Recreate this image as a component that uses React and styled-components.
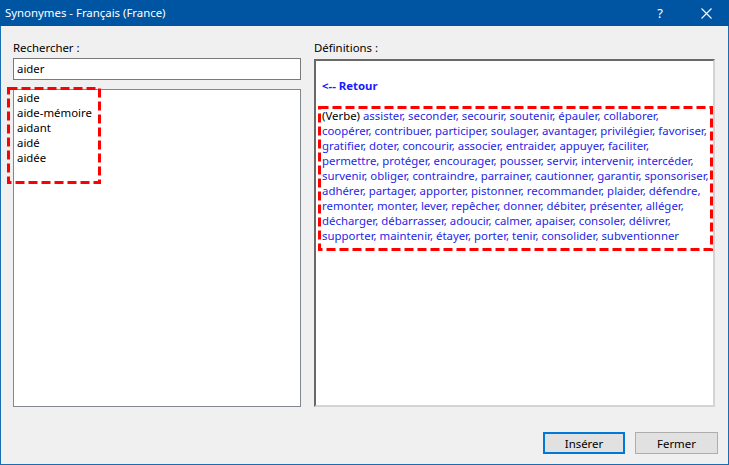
import styled, { createGlobalStyle } from "styled-components";

const GlobalStyle = createGlobalStyle`
  html, body {
    margin: 0;
    padding: 0;
    background: #f0f0f0;
  }
  body {
    font-family: "Noto Sans", "DejaVu Sans", sans-serif;
    font-size: 11.4px;
  }
`;

const Window = styled.div`
  box-sizing: border-box;
  width: 729px;
  height: 465px;
  border: 1px solid #1a6cb3;
  border-top: none;
  background: #f0f0f0;
  display: flex;
  flex-direction: column;
`;

const TitleBar = styled.div`
  height: 26px;
  background: #0055a2;
  color: #ffffff;
  display: flex;
  align-items: center;
  margin: 0 -1px;
  padding-left: 5px;
  font-size: 11.4px;
`;

const Title = styled.div`
  flex: 1;
  line-height: 26px;
`;

const TitleButton = styled.div`
  width: ${(p) => p.$w}px;
  height: 26px;
  display: flex;
  align-items: center;
  justify-content: center;
  font-size: 13px;
`;

const Body = styled.div`
  flex: 1;
  display: flex;
  gap: 13px;
  padding: 14px 13px 0 12px;
  min-height: 0;
`;

const Column = styled.div`
  width: ${(p) => p.$w}px;
  display: flex;
  flex-direction: column;
`;

const Label = styled.div`
  line-height: 15px;
  height: 15px;
  color: #000;
  margin-bottom: ${(p) => p.$mb}px;
`;

const SearchInput = styled.div`
  box-sizing: border-box;
  height: 22px;
  border: 1px solid #7a7a7a;
  background: #fff;
  padding: 0 3px;
  line-height: 19px;
  color: #000;
`;

const ListBox = styled.div`
  position: relative;
  box-sizing: border-box;
  flex: 1;
  margin-top: 9px;
  border: 1px solid #828790;
  background: #fff;
  padding: 0 3px;
`;

const ListItem = styled.div`
  line-height: 15px;
  color: #000;
  white-space: nowrap;
`;

const DefBox = styled.div`
  position: relative;
  box-sizing: border-box;
  flex: 1;
  background: #fff;
  border-style: solid;
  border-width: 2px;
  border-color: #696969 #d4d4d4 #d4d4d4 #696969;
  padding: 17px 6px 0 6px;
`;

const BackLink = styled.div`
  color: #1a1aff;
  font-weight: bold;
  line-height: 15px;
  margin-bottom: 15px;
`;

const DefLine = styled.div`
  line-height: 15px;
  white-space: nowrap;
  color: #1f1fe8;
`;

const Category = styled.span`
  color: #000;
`;

const Marker = styled.svg`
  position: absolute;
  left: ${(p) => p.$x}px;
  top: ${(p) => p.$y}px;
  overflow: visible;
  pointer-events: none;
`;

const Footer = styled.div`
  display: flex;
  justify-content: flex-end;
  gap: 10px;
  padding: 25px 10px 10px 0;
`;

const Button = styled.div`
  box-sizing: border-box;
  width: ${(p) => p.$w}px;
  height: 22px;
  background: #e1e1e1;
  border: ${(p) => (p.$primary ? "2px solid #0078d7" : "1px solid #adadad")};
  display: flex;
  align-items: center;
  justify-content: center;
  color: #000;
`;

function DashedMarker({ x, y, w, h }) {
  return (
    <Marker $x={x} $y={y} width={w} height={h}>
      <rect
        x="1.5"
        y="1.5"
        width={w - 3}
        height={h - 3}
        fill="none"
        stroke="#ff0000"
        strokeWidth="3"
        strokeDasharray="9 4"
      />
    </Marker>
  );
}

const results = ["aide", "aide-mémoire", "aidant", "aidé", "aidée"];

const lines = [
  "assister, seconder, secourir, soutenir, épauler, collaborer,",
  "coopérer, contribuer, participer, soulager, avantager, privilégier, favoriser,",
  "gratifier, doter, concourir, associer, entraider, appuyer, faciliter,",
  "permettre, protéger, encourager, pousser, servir, intervenir, intercéder,",
  "survenir, obliger, contraindre, parrainer, cautionner, garantir, sponsoriser,",
  "adhérer, partager, apporter, pistonner, recommander, plaider, défendre,",
  "remonter, monter, lever, repêcher, donner, débiter, présenter, alléger,",
  "décharger, débarrasser, adoucir, calmer, apaiser, consoler, délivrer,",
  "supporter, maintenir, étayer, porter, tenir, consolider, subventionner",
];

export default function App() {
  return (
    <>
      <GlobalStyle />
      <Window>
        <TitleBar>
          <Title>Synonymes - Français (France)</Title>
          <TitleButton $w={46}>?</TitleButton>
          <TitleButton $w={46}>
            <svg width="11" height="11" viewBox="0 0 11 11">
              <path d="M0.5 0.5 L10.5 10.5 M10.5 0.5 L0.5 10.5" stroke="#fff" strokeWidth="1.1" />
            </svg>
          </TitleButton>
        </TitleBar>
        <Body>
          <Column $w={288}>
            <Label $mb={3}>Rechercher :</Label>
            <SearchInput>aider</SearchInput>
            <ListBox>
              {results.map((r) => (
                <ListItem key={r}>{r}</ListItem>
              ))}
              <DashedMarker x={-7} y={-3} w={94} h={97} />
            </ListBox>
          </Column>
          <Column $w={401}>
            <Label $mb={4}>Définitions :</Label>
            <DefBox>
              <BackLink>&lt;-- Retour</BackLink>
              {lines.map((l, i) => (
                <DefLine key={i}>
                  {i === 0 && <Category>(Verbe) </Category>}
                  {l}
                </DefLine>
              ))}
              <DashedMarker x={2} y={45} w={395} h={145} />
            </DefBox>
          </Column>
        </Body>
        <Footer>
          <Button $w={82} $primary>Insérer</Button>
          <Button $w={83}>Fermer</Button>
        </Footer>
      </Window>
    </>
  );
}
